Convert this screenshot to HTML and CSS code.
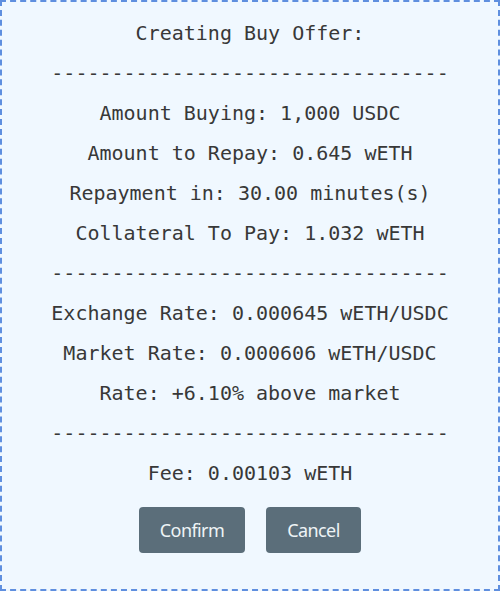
FILE: index.html
```html
<!DOCTYPE html>
<html>
<head>
<meta charset="utf-8">
<link rel="stylesheet" href="styles.css">
</head>
<body>
<div class="panel">
  <div class="lines">
    <p class="line">Creating Buy Offer:</p>
    <p class="line">---------------------------------</p>
    <p class="line">Amount Buying: 1,000 USDC</p>
    <p class="line">Amount to Repay: 0.645 wETH</p>
    <p class="line">Repayment in: 30.00 minutes(s)</p>
    <p class="line">Collateral To Pay: 1.032 wETH</p>
    <p class="line">---------------------------------</p>
    <p class="line">Exchange Rate: 0.000645 wETH/USDC</p>
    <p class="line">Market Rate: 0.000606 wETH/USDC</p>
    <p class="line">Rate: +6.10% above market</p>
    <p class="line">---------------------------------</p>
    <p class="line">Fee: 0.00103 wETH</p>
  </div>
  <div class="actions">
    <button class="btn btn-confirm">Confirm</button>
    <button class="btn btn-cancel">Cancel</button>
  </div>
</div>
</body>
</html>
```

FILE: styles.css
```css
html, body {
  margin: 0;
  padding: 0;
  background: #ffffff;
}
.panel {
  box-sizing: border-box;
  width: 500px;
  height: 591px;
  border: 2px dashed #5f8fdf;
  background: #f0f8ff;
  padding-top: 11px;
  display: flex;
  flex-direction: column;
  align-items: center;
}
.lines {
  display: flex;
  flex-direction: column;
  align-items: center;
}
.line {
  margin: 0;
  font-family: "DejaVu Sans Mono", monospace;
  font-size: 20px;
  line-height: 40px;
  color: #383838;
  white-space: pre;
}
.actions {
  margin-top: 14px;
  display: flex;
  gap: 21px;
}
.btn {
  height: 46px;
  border: none;
  border-radius: 4px;
  background: #5b6e7a;
  color: #eef4f6;
  font-family: "Noto Sans", sans-serif;
  font-size: 18px;
  letter-spacing: -0.6px;
  padding: 0;
  cursor: pointer;
}
.btn-confirm { width: 106px; }
.btn-cancel { width: 95px; }
```
